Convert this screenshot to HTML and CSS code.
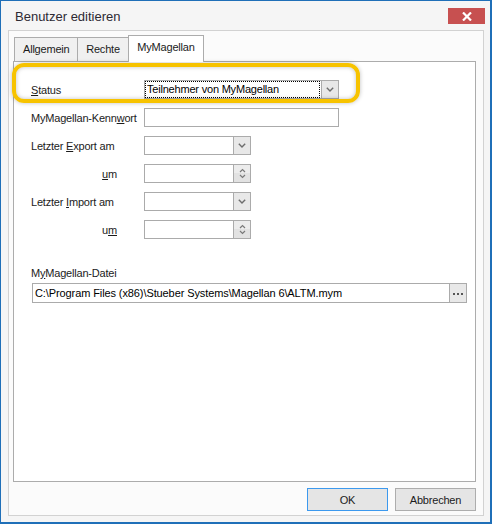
FILE: index.html
```html
<!DOCTYPE html>
<html lang="de">
<head>
  <meta charset="UTF-8">
  <title>Benutzer editieren</title>
  <link rel="stylesheet" href="styles.css">
</head>
<body>
  <div class="window">
    <div class="titlebar">
      <span class="title">Benutzer editieren</span>
      <span class="close">
        <svg width="10" height="9" viewBox="0 0 10 9"><path d="M1 0.5 L9 8.5 M9 0.5 L1 8.5" stroke="#fff" stroke-width="2.2"/></svg>
      </span>
    </div>

    <div class="client">
      <div class="tabs">
        <div class="tab">Allgemein</div>
        <div class="tab">Rechte</div>
        <div class="tab active">MyMagellan</div>
      </div>

      <div class="panel">
        <!-- Markierung um die Status-Zeile -->
        <div class="highlight"></div>

        <div class="form">
          <label class="lbl"><u>S</u>tatus</label>
          <div class="field wide combo">
            <span class="value focus">Teilnehmer von MyMagellan</span>
            <span class="btn">
              <svg width="8" height="5" viewBox="0 0 8 5"><path d="M0.8 0.8 L4 4 L7.2 0.8" fill="none" stroke="#6d6d6d" stroke-width="1.4"/></svg>
            </span>
          </div>

          <label class="lbl">MyMagellan-Kenn<u>w</u>ort</label>
          <div class="field wide"></div>

          <label class="lbl">Letzter <u>E</u>xport am</label>
          <div class="field short combo">
            <span class="value"></span>
            <span class="btn">
              <svg width="8" height="5" viewBox="0 0 8 5"><path d="M0.8 0.8 L4 4 L7.2 0.8" fill="none" stroke="#6d6d6d" stroke-width="1.4"/></svg>
            </span>
          </div>

          <label class="lbl right"><u>u</u>m</label>
          <div class="field short combo">
            <span class="value"></span>
            <span class="btn spin">
              <svg width="7" height="11" viewBox="0 0 7 11"><path d="M1 4 L3.5 1.5 L6 4 M1 7 L3.5 9.5 L6 7" fill="none" stroke="#7a7a7a" stroke-width="1.2"/></svg>
            </span>
          </div>

          <label class="lbl">Letzter <u>I</u>mport am</label>
          <div class="field short combo">
            <span class="value"></span>
            <span class="btn">
              <svg width="8" height="5" viewBox="0 0 8 5"><path d="M0.8 0.8 L4 4 L7.2 0.8" fill="none" stroke="#6d6d6d" stroke-width="1.4"/></svg>
            </span>
          </div>

          <label class="lbl right">u<u>m</u></label>
          <div class="field short combo">
            <span class="value"></span>
            <span class="btn spin">
              <svg width="7" height="11" viewBox="0 0 7 11"><path d="M1 4 L3.5 1.5 L6 4 M1 7 L3.5 9.5 L6 7" fill="none" stroke="#7a7a7a" stroke-width="1.2"/></svg>
            </span>
          </div>
        </div>

        <div class="file-block">
          <label class="lbl">M<u>y</u>Magellan-Datei</label>
          <div class="field file combo">
            <span class="value">C:\Program Files (x86)\Stueber Systems\Magellan 6\ALTM.mym</span>
            <span class="btn dots">
              <svg width="10" height="2" viewBox="0 0 10 2"><rect x="0" y="0" width="2" height="2" fill="#555"/><rect x="4" y="0" width="2" height="2" fill="#555"/><rect x="8" y="0" width="2" height="2" fill="#555"/></svg>
            </span>
          </div>
        </div>
      </div>

      <div class="buttons">
        <button class="button default">OK</button>
        <button class="button">Abbrechen</button>
      </div>
    </div>
  </div>
</body>
</html>
```

FILE: styles.css
```css
* {
  box-sizing: border-box;
}
body {
  margin: 0;
  background: #fff;
  font-family: "Liberation Sans", Arial, sans-serif;
  font-size: 11px;
  letter-spacing: -0.2px;
  color: #1b1b1b;
}

/* Fenster */
.window {
  width: 492px;
  height: 524px;
  border: 1px solid #1f6fb8;
  border-right-width: 2px;
  border-bottom-width: 2px;
  background: #f5f5f5;
  display: flex;
  flex-direction: column;
}
.titlebar {
  height: 29px;
  display: flex;
  align-items: flex-start;
  justify-content: space-between;
  padding: 0 5px 0 14px;
}
.title {
  font-size: 13px;
  letter-spacing: 0;
  color: #2d2a33;
  margin-top: 8px;
}
.close {
  width: 37px;
  height: 16px;
  margin-top: 7px;
  background: #c75050;
  display: flex;
  align-items: center;
  justify-content: center;
}

.client {
  margin: 0 6px 0 7px;
  height: 486px;
  border: 1px solid #d2d2d2;
  background: #fbfbfb;
  padding: 4px 7px 3px 4px;
  display: flex;
  flex-direction: column;
}

/* Reiter */
.tabs {
  display: flex;
  align-items: flex-end;
  height: 26px;
  padding-left: 1px;
}
.tab {
  height: 24px;
  border: 1px solid #acacac;
  border-bottom: none;
  background: #f0f0f0;
  padding: 0 8px;
  line-height: 23px;
  text-align: center;
}
.tab + .tab {
  margin-left: -1px;
}
.tab:nth-child(1) {
  width: 64px;
}
.tab:nth-child(2) {
  width: 52px;
}
.tab.active {
  width: 76px;
  height: 27px;
  margin-bottom: -1px;
  background: #fff;
  line-height: 22px;
  position: relative;
  z-index: 1;
}

.panel {
  position: relative;
  height: 421px;
  border: 1px solid #acacac;
  background: #fff;
  padding: 18px 8px 0 17px;
}
.highlight {
  position: absolute;
  left: -2px;
  top: 1px;
  width: 348px;
  height: 40px;
  border: 4px solid #f7c300;
  border-radius: 12px;
  box-shadow: 0 0 4px rgba(0, 0, 0, 0.25), inset 0 0 4px rgba(0, 0, 0, 0.25);
  pointer-events: none;
}

/* Formular */
.form {
  display: grid;
  grid-template-columns: 113px auto;
  grid-auto-rows: 19px;
  row-gap: 9px;
  align-items: center;
}
.lbl {
  display: block;
  color: #1b1b1b;
}
.lbl.right {
  text-align: right;
  padding-right: 27px;
}
.field {
  height: 19px;
  border: 1px solid #ababab;
  background: #fff;
  display: flex;
}
.field.wide {
  width: 195px;
}
.field.short {
  width: 107px;
}
.combo .value {
  flex: 1;
  min-width: 0;
  padding-left: 2px;
  line-height: 17px;
  color: #000;
  white-space: nowrap;
  overflow: hidden;
}
.value.focus {
  outline: 1px dotted #000;
  outline-offset: -1px;
  margin: 0 1px 0 0;
  padding-left: 2px;
}
.btn {
  width: 17px;
  border-left: 1px solid #ababab;
  background: #e8e8e8;
  display: flex;
  align-items: center;
  justify-content: center;
}
.btn.spin {
  background: linear-gradient(#ececec 50%, #e2e2e2 50%);
}

.file-block {
  margin-top: 27px;
}
.file-block .lbl {
  line-height: 14px;
  margin-bottom: 3px;
}
.field.file {
  margin-left: 1px;
  height: 20px;
}
.field.file .value {
  line-height: 18px;
  padding-left: 2px;
  letter-spacing: -0.1px;
}
.btn.dots {
  width: 17px;
  align-items: flex-end;
  padding-bottom: 7px;
}

/* Schaltflaechen */
.buttons {
  display: flex;
  justify-content: flex-end;
  gap: 7px;
  margin-top: 6px;
}
.button {
  width: 81px;
  height: 23px;
  border: 1px solid #adadad;
  background: #e5e5e5;
  font-family: "Liberation Sans", Arial, sans-serif;
  font-size: 11px;
  letter-spacing: -0.2px;
  color: #1b1b1b;
  padding: 0;
}
.button.default {
  border-color: #3c99ee;
}
```
